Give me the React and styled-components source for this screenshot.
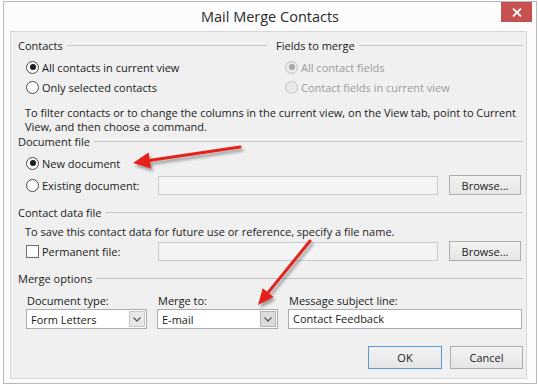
import React from "react"
import styled, { createGlobalStyle } from "styled-components"

const GlobalStyle = createGlobalStyle`
  html, body {
    margin: 0;
    padding: 0;
    background: #ffffff;
  }
  body {
    font-family: "Open Sans", "Noto Sans", sans-serif;
    font-size: 11px;
    color: #1b1b1b;
  }
  * {
    box-sizing: border-box;
  }
`

const Stage = styled.div`
  position: relative;
  width: 538px;
  height: 385px;
  padding: 1px 0 0 3px;
`

const Window = styled.div`
  width: 534px;
  height: 383px;
  border: 1px solid #b8b8b8;
  background: #fcfcfc;
  display: flex;
  flex-direction: column;
  padding: 0 9px 4px 6px;
`

const TitleBar = styled.div`
  display: grid;
  grid-template-columns: 1fr auto 1fr;
  align-items: center;
  height: 29px;
  margin: 0 -9px 0 -6px;
  .title {
    grid-column: 2;
    font-size: 14.5px;
    color: #2b2b2b;
  }
`

const CloseButton = styled.div`
  grid-column: 3;
  justify-self: end;
  align-self: start;
  width: 31px;
  height: 20px;
  margin-right: 4px;
  background: #c75050;
  display: flex;
  align-items: center;
  justify-content: center;
`

const Panel = styled.div`
  flex: 1;
  background: #f0f0f0;
  border: 1px solid #d6d6d6;
  padding: 7px 3px 7px 7px;
  display: flex;
  flex-direction: column;
`

const GroupHeader = styled.div`
  display: flex;
  align-items: center;
  gap: 4px;
  height: 14px;
  line-height: 14px;
  margin-top: ${({ gap }) => gap || 0}px;
  &::after {
    content: "";
    flex: 1;
    margin-top: -1px;
    border-top: 1px solid #c4c4c4;
  }
`

const TwoGroups = styled.div`
  display: grid;
  grid-template-columns: 1fr 247px;
  column-gap: 9px;
`

const ChoiceList = styled.div`
  display: flex;
  flex-direction: column;
  margin-top: 4px;
  padding-left: ${({ indent }) => indent}px;
`

const Choice = styled.label`
  display: flex;
  align-items: center;
  gap: 3px;
  height: 20px;
  white-space: nowrap;
  color: ${({ disabled }) => (disabled ? "#9b9b9b" : "#1b1b1b")};
`

const Radio = styled.span`
  width: 13px;
  height: 13px;
  flex: none;
  border-radius: 50%;
  border: 1px solid ${({ disabled }) => (disabled ? "#c3c3c3" : "#4a4a4a")};
  background: ${({ disabled }) => (disabled ? "#e9e9e9" : "#ffffff")};
  display: flex;
  align-items: center;
  justify-content: center;
  &::after {
    content: "";
    display: ${({ checked }) => (checked ? "block" : "none")};
    width: 6px;
    height: 6px;
    border-radius: 50%;
    background: ${({ disabled }) => (disabled ? "#a8a8a8" : "#1b1b1b")};
  }
`

const CheckBox = styled.span`
  width: 13px;
  height: 13px;
  flex: none;
  border: 1px solid #6f6f6f;
  background: #ffffff;
`

const Note = styled.p`
  margin: ${({ top }) => top}px 0 0;
  padding-left: 7px;
  line-height: 14px;
  white-space: nowrap;
`

const FileRow = styled.div`
  display: grid;
  grid-template-columns: 121px 280px 72px;
  column-gap: 11px;
  align-items: center;
  height: 20px;
  margin-top: ${({ top }) => top || 0}px;
  padding-left: 8px;
`

const TextBox = styled.div`
  height: ${({ h }) => h || 19}px;
  border: 1px solid ${({ disabled }) => (disabled ? "#c6ccd4" : "#abadb3")};
  background: ${({ disabled }) => (disabled ? "#f4f4f4" : "#ffffff")};
  padding: 0 4px;
  line-height: ${({ h }) => (h || 19) - 2}px;
  white-space: nowrap;
`

const Button = styled.div`
  width: ${({ w }) => w}px;
  height: ${({ h }) => h}px;
  border: 1px solid ${({ primary }) => (primary ? "#5a9ad6" : "#adadad")};
  background: linear-gradient(#f2f2f2, #e6e6e6);
  display: flex;
  align-items: center;
  justify-content: center;
  color: #1b1b1b;
`

const MergeGrid = styled.div`
  display: grid;
  grid-template-columns: 121px 121px 234px;
  column-gap: 10px;
  margin-top: 8px;
  padding-left: 8px;
`

const Field = styled.div`
  display: flex;
  flex-direction: column;
  gap: 1px;
  .label {
    height: 14px;
    line-height: 14px;
    padding-left: 1px;
  }
`

const Combo = styled.div`
  display: flex;
  align-items: center;
  height: 20px;
  border: 1px solid #acacac;
  background: #ffffff;
  padding: 0 1px 0 4px;
  .value {
    flex: 1;
  }
`

const ComboArrow = styled.div`
  width: 16px;
  height: 16px;
  border: 1px solid ${({ hot }) => (hot ? "#b4b4b4" : "#c6c6c6")};
  background: ${({ hot }) => (hot ? "#dcdcdc" : "#e8e8e8")};
  display: flex;
  align-items: center;
  justify-content: center;
`

const ButtonRow = styled.div`
  display: flex;
  justify-content: flex-end;
  gap: 8px;
  margin-top: 17px;
`

const Overlay = styled.svg`
  position: absolute;
  left: 0;
  top: 0;
  pointer-events: none;
`

const Chevron = () => (
  <svg width="8" height="5" viewBox="0 0 8 5">
    <path d="M0.5 0.5 L4 4 L7.5 0.5" fill="none" stroke="#5a5a5a" strokeWidth="1.3" />
  </svg>
)

const Arrow = ({ tail, neck, tip, left, right }) => (
  <g filter="url(#shadow)">
    <line x1={tail[0]} y1={tail[1]} x2={neck[0]} y2={neck[1]} stroke="#e3201b" strokeWidth="3" strokeLinecap="round" />
    <polygon points={`${tip.join(",")} ${left.join(",")} ${right.join(",")}`} fill="#e3201b" />
  </g>
)

export default function App() {
  return (
    <Stage>
      <GlobalStyle />
      <Window>
        <TitleBar>
          <span className="title">Mail Merge Contacts</span>
          <CloseButton>
            <svg width="10" height="9" viewBox="0 0 10 9">
              <path d="M1 0.5 L9 8.5 M9 0.5 L1 8.5" stroke="#ffffff" strokeWidth="1.8" />
            </svg>
          </CloseButton>
        </TitleBar>
        <Panel>
          <TwoGroups>
            <div>
              <GroupHeader>Contacts</GroupHeader>
              <ChoiceList indent={8}>
                <Choice>
                  <Radio checked />
                  All contacts in current view
                </Choice>
                <Choice>
                  <Radio />
                  Only selected contacts
                </Choice>
              </ChoiceList>
            </div>
            <div>
              <GroupHeader>Fields to merge</GroupHeader>
              <ChoiceList indent={9}>
                <Choice disabled>
                  <Radio checked disabled />
                  All contact fields
                </Choice>
                <Choice disabled>
                  <Radio disabled />
                  Contact fields in current view
                </Choice>
              </ChoiceList>
            </div>
          </TwoGroups>
          <Note top={9}>
            To filter contacts or to change the columns in the current view, on the View tab, point to Current
            <br />
            View, and then choose a command.
          </Note>

          <GroupHeader gap={1}>Document file</GroupHeader>
          <ChoiceList indent={8}>
            <Choice>
              <Radio checked />
              New document
            </Choice>
          </ChoiceList>
          <FileRow top={2}>
            <Choice>
              <Radio />
              Existing document:
            </Choice>
            <TextBox disabled />
            <Button w={72} h={20}>Browse...</Button>
          </FileRow>

          <GroupHeader gap={11}>Contact data file</GroupHeader>
          <Note top={5}>To save this contact data for future use or reference, specify a file name.</Note>
          <FileRow top={2}>
            <Choice>
              <CheckBox />
              Permanent file:
            </Choice>
            <TextBox disabled />
            <Button w={72} h={20}>Browse...</Button>
          </FileRow>

          <GroupHeader gap={11}>Merge options</GroupHeader>
          <MergeGrid>
            <Field>
              <span className="label">Document type:</span>
              <Combo>
                <span className="value">Form Letters</span>
                <ComboArrow>
                  <Chevron />
                </ComboArrow>
              </Combo>
            </Field>
            <Field>
              <span className="label">Merge to:</span>
              <Combo>
                <span className="value">E-mail</span>
                <ComboArrow hot>
                  <Chevron />
                </ComboArrow>
              </Combo>
            </Field>
            <Field>
              <span className="label">Message subject line:</span>
              <TextBox h={20}>Contact Feedback</TextBox>
            </Field>
          </MergeGrid>
          <ButtonRow>
            <Button primary w={74} h={23}>OK</Button>
            <Button w={73} h={23}>Cancel</Button>
          </ButtonRow>
        </Panel>
      </Window>

      <Overlay width="538" height="385" viewBox="0 0 538 385">
        <defs>
          <filter id="shadow" x="-20%" y="-20%" width="140%" height="140%">
            <feDropShadow dx="2" dy="3" stdDeviation="1.6" floodColor="#000000" floodOpacity="0.35" />
          </filter>
        </defs>
        <Arrow tail={[240, 147]} neck={[149, 160.5]} tip={[133, 163]} left={[148.6, 152.6]} right={[151, 168.4]} />
        <Arrow tail={[310, 241]} neck={[268, 292.6]} tip={[258, 305]} left={[262.7, 288.2]} right={[273.5, 297]} />
      </Overlay>
    </Stage>
  )
}
